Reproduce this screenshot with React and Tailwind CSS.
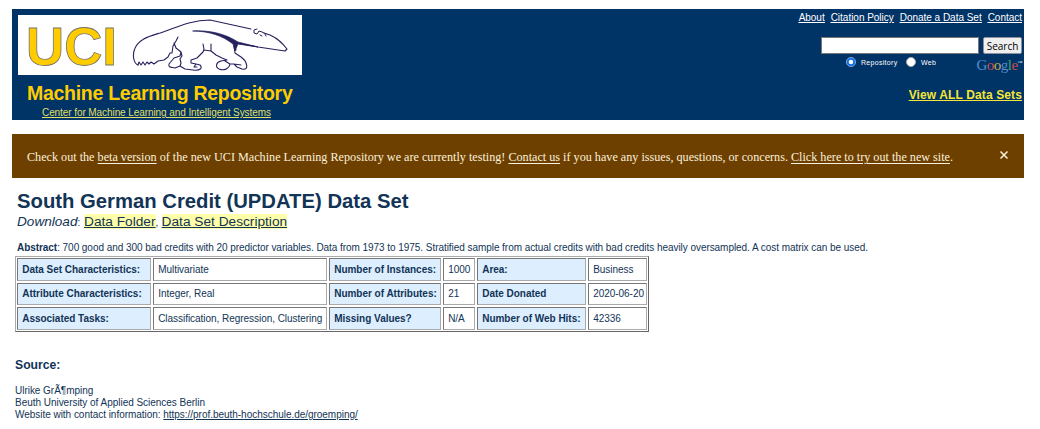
const NAV_LINKS = ["About", "Citation Policy", "Donate a Data Set", "Contact"];

const ROWS = [
  ["Data Set Characteristics:", "Multivariate", "Number of Instances:", "1000", "Area:", "Business"],
  ["Attribute Characteristics:", "Integer, Real", "Number of Attributes:", "21", "Date Donated", "2020-06-20"],
  ["Associated Tasks:", "Classification, Regression, Clustering", "Missing Values?", "N/A", "Number of Web Hits:", "42336"],
];

function Anteater() {
  return (
    <svg className="ml-[13px] h-[60px] w-[158px] shrink-0" viewBox="0 0 158 60" fill="none" stroke="#24215c" strokeWidth="1.1" strokeLinejoin="round" strokeLinecap="round">
      <path d="M7 50C2 48 2 40 3 36C6 24 19 21 29 18C44 13 59 5 79 5L120 14M133 18L139 20C148 24 152 29 156 34L154 36L127 32L105 28" />
      <path d="M7 50L8 47L10 50L12 47L14 50L16 47L18 49L20 47L23 49L27 46L33 45L37 42L39 38L41 38L42 31L45 26L47 22M43 28L45 33L50 37L51 41L49 44M50 37L49 41L43 43L38 49C37 53 41 52 44 53L49 51L50 48L49 44M49 51L54 54L62 55C69 56 72 53 69 50L65 49L63 52L66 52M65 49L60 48L60 45L66 43L69 40L72 37L73 34L72 29M73 35L80 36L80 29M80 36L85 40L91 43L96 45L90 46C85 47 84 52 88 54C93 56 98 54 99 49L94 46M99 49L103 49L106 52L111 54C118 56 117 47 110 42L104 38L103 31L105 35M103 49L110 50" />
      <path d="M62 16C77 15 93 18 107 27L127 32L107 29L104 36L102 29C92 21 78 16 62 16Z" fill="#24215c" strokeWidth=".7" />
      <path d="M126 14L123 15L123 18L126 19L128 16L131 17L133 18M129 20L131 21M134 19L135 21" strokeWidth="1" />
    </svg>
  );
}

function Header() {
  return (
    <header className="flex h-[111px] justify-between bg-[#003366]">
      <div className="ml-[6px] w-[284px] pt-[6px]">
        <div className="flex h-[60px] items-start bg-white">
          <svg className="h-[60px] w-[100px] shrink-0 overflow-visible" viewBox="0 0 100 60">
            <text x="8" y="49.5" fontFamily="Liberation Sans, sans-serif" fontWeight="bold" fontSize="53" textLength="91" lengthAdjust="spacingAndGlyphs" fill="#ffcc00" stroke="#77736c" strokeWidth=".8">UCI</text>
          </svg>
          <Anteater />
        </div>
        <div className="ml-[9px] mt-[6px] whitespace-nowrap text-[19.5px] leading-6 font-bold tracking-[-0.28px] text-[#ffcc00]">Machine Learning Repository</div>
        <a className="ml-[24px] block whitespace-nowrap text-[10px] leading-[15px] tracking-[-0.08px] text-[#e2df62] underline">Center for Machine Learning and Intelligent Systems</a>
      </div>
      <div className="flex flex-col items-end pr-[2px]">
        <nav className="flex gap-[6px] pt-[2px] text-[10px] leading-[14px] tracking-[-0.02px] text-white underline">
          {NAV_LINKS.map((label) => <a key={label} className="whitespace-nowrap">{label}</a>)}
        </nav>
        <div className="mt-[12px] flex gap-[4px]">
          <div className="h-[17px] w-[158px] border border-[#777] bg-white" />
          <button className="h-[17px] w-[39px] rounded-[2px] border border-[#8f8f9d] bg-[#efefef] font-['Open_Sans',sans-serif] text-[10px] leading-[14px] text-black">Search</button>
        </div>
        <div className="flex h-[20px] w-[176px] items-start text-[7px] leading-[16px] text-white">
          <svg className="mt-[3px] size-[10px]" viewBox="0 0 10 10"><circle cx="5" cy="5" r="3.3" fill="#fff" stroke="#0b70f0" strokeWidth="2" /><circle cx="5" cy="5" r="4.6" fill="none" stroke="#dce9fa" strokeWidth=".6" /></svg>
          <span className="ml-[5px] mt-[1px] w-[45px] tracking-[0.3px]">Repository</span>
          <span className="mt-[3px] size-[10px] rounded-full border border-[#aaa] bg-white" />
          <span className="ml-[5px] mt-[1px] tracking-[0.3px]">Web</span>
          <span className="ml-auto mt-[3px] flex font-['Liberation_Serif',serif] text-[15px] leading-[16px] tracking-[-0.5px]">
            <span className="text-[#4f8fd0]">G</span><span className="text-[#c8504c]">o</span><span className="text-[#d0a94a]">o</span><span className="text-[#4f8fd0]">g</span><span className="text-[#4c9f70]">l</span><span className="text-[#c8504c]">e</span>
            <span className="text-[5px] leading-[12px] text-white">™</span>
          </span>
        </div>
        <a className="mt-[13px] whitespace-nowrap text-[12px] leading-[16px] font-bold tracking-[0.12px] text-[#f3e638] underline">View ALL Data Sets</a>
      </div>
    </header>
  );
}

function Banner() {
  return (
    <div className="mt-[14px] flex h-[44px] items-center justify-between bg-[#6e4000] pr-[15px] pl-[15px] text-[#fbf0dc]">
      <p className="whitespace-nowrap pt-[2px] font-['Liberation_Serif',serif] text-[12.16px]">
        Check out the <a className="underline underline-offset-2">beta version</a> of the new UCI Machine Learning Repository we are currently testing! <a className="underline underline-offset-2">Contact us</a> if you have any issues, questions, or concerns. <a className="underline underline-offset-2">Click here to try out the new site</a>.
      </p>
      <svg className="mb-[2px] size-[10px]" viewBox="0 0 10 10" stroke="currentColor" strokeWidth="1.5"><path d="M1.5 1.5L8.5 8.5M8.5 1.5L1.5 8.5" /></svg>
    </div>
  );
}

function DataTable() {
  return (
    <div className="ml-[3px] grid h-[76px] w-[634px] grid-cols-[134px_174px_112px_32px_109px_59px] grid-rows-[23px_22px_23px] gap-[2px] border border-t-[#aaa] border-r-[#666] border-b-[#666] border-l-[#aaa] p-px">
      {ROWS.flat().map((text, i) => (
        <div key={i} className={`flex items-center border border-t-[#777] border-r-[#aaa] border-b-[#aaa] border-l-[#777] pl-[4.2px] whitespace-nowrap ${i % 2 === 0 ? "bg-[#ddeeff] font-bold tracking-[-0.02px]" : "bg-white tracking-[-0.04px]"}`}>{text}</div>
      ))}
    </div>
  );
}

export default function App() {
  return (
    <div className="h-[429px] w-[1040px] overflow-hidden bg-white pt-[9px] pr-[16px] pl-[12px] font-['Liberation_Sans',sans-serif] text-[10px] leading-[12px] text-[#123456]">
      <Header />
      <Banner />
      <h1 className="mt-[11px] ml-[5px] text-[20.27px] leading-[24px] font-bold whitespace-nowrap">South German Credit (UPDATE) Data Set</h1>
      <p className="ml-[5px] h-[17px] text-[10px] leading-[17px] whitespace-nowrap">
        <i className="text-[13.6px]">Download</i>: <a className="ml-[1px] bg-[#ffffaa] text-[13.7px] underline">Data Folder</a>, <a className="ml-[0.5px] bg-[#ffffaa] text-[13.7px] underline">Data Set Description</a>
      </p>
      <p className="mt-[12px] ml-[5px] h-[14px] whitespace-nowrap tracking-[-0.052px]"><b>Abstract</b>: 700 good and 300 bad credits with 20 predictor variables. Data from 1973 to 1975. Stratified sample from actual credits with bad credits heavily oversampled. A cost matrix can be used.</p>
      <DataTable />
      <h2 className="mt-[26px] ml-[3px] text-[12.2px] leading-[15px] font-bold">Source:</h2>
      <p className="mt-[12px] ml-[3px] whitespace-nowrap tracking-[-0.03px]">
        Ulrike GrÃ¶mping<br />
        Beuth University of Applied Sciences Berlin<br />
        Website with contact information: <a className="underline">https://prof.beuth-hochschule.de/groemping/</a>
      </p>
    </div>
  );
}
